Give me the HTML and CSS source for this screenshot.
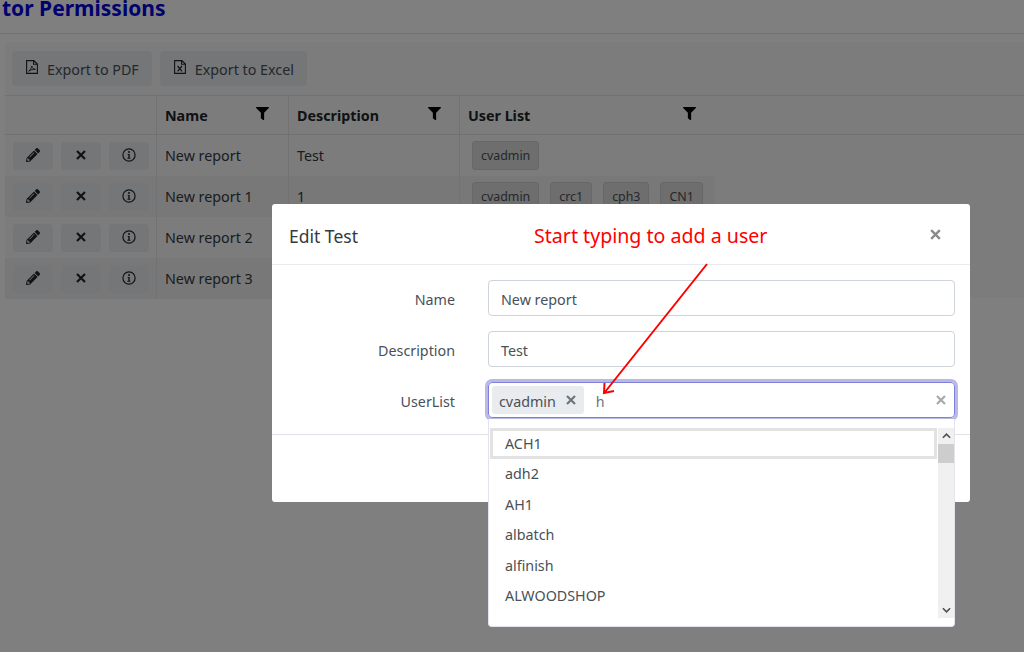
FILE: index.html
```html
<!DOCTYPE html>
<html lang="en">
<head>
<meta charset="utf-8">
<title>Permissions</title>
<link rel="stylesheet" href="styles.css">
</head>
<body>
<svg class="defs" width="0" height="0" aria-hidden="true">
  <symbol id="i-filter" viewBox="0 0 512 512"><path d="M487.976 0H24.028C2.71 0-8.047 25.866 7.058 40.971L192 225.941V432c0 7.831 3.821 15.17 10.237 19.662l80 55.98C298.02 518.69 320 507.493 320 487.98V225.941l184.947-184.97C520.021 25.896 509.338 0 487.976 0z"/></symbol>
  <symbol id="i-pencil" viewBox="0 0 512 512"><path d="M497.9 142.1l-46.1 46.1c-4.7 4.7-12.3 4.7-17 0l-111-111c-4.7-4.7-4.7-12.3 0-17l46.1-46.1c18.7-18.7 49.1-18.7 67.9 0l60.1 60.1c18.8 18.7 18.8 49.1 0 67.9zM284.2 99.8L21.6 362.4.4 483.9c-2.9 16.4 11.4 30.6 27.8 27.8l121.5-21.3 262.6-262.6c4.7-4.7 4.7-12.3 0-17l-111-111c-4.8-4.7-12.4-4.7-17.1 0zM124.1 339.9c-5.5-5.5-5.5-14.3 0-19.8l154-154c5.5-5.5 14.3-5.5 19.8 0s5.5 14.3 0 19.8l-154 154c-5.5 5.5-14.3 5.5-19.8 0zM88 424h48v36.3l-64.5 11.3-31.1-31.1L51.7 376H88v48z"/></symbol>
  <symbol id="i-x" viewBox="0 0 12 12"><path d="M2 2l8 8M10 2l-8 8" fill="none" stroke="currentColor" stroke-width="2.2"/></symbol>
  <symbol id="i-info" viewBox="0 0 14 14"><circle cx="7" cy="7" r="6.1" fill="none" stroke="currentColor" stroke-width="1.2"/><circle cx="7" cy="4" r="1"/><path d="M5.7 6h2v3.8h.8v1h-3.1v-1h.9V7h-.6z"/></symbol>
  <symbol id="i-pdf" viewBox="0 0 12 14"><path d="M.6.6h7.2l3.6 3.4v9.4H.6z M7.6.8v3.4h3.6" fill="none" stroke="currentColor" stroke-width="1.1"/><path d="M2.6 11.2c1.6-1 2.8-3 3.2-5.2.4 2 1.4 3 3.6 3.4-2.4-.2-4.8.4-6.8 1.8z" fill="none" stroke="currentColor" stroke-width=".9"/></symbol>
  <symbol id="i-xls" viewBox="0 0 12 14"><path d="M.6.6h7.2l3.6 3.4v9.4H.6z M7.6.8v3.4h3.6" fill="none" stroke="currentColor" stroke-width="1.1"/><path d="M3.6 6l4.4 5.4M8 6l-4.4 5.4" fill="none" stroke="currentColor" stroke-width="1.2"/></symbol>
</svg>

<div class="page">
  <h1 class="title">tor Permissions</h1>
  <section class="grid">
    <div class="toolbar">
      <button class="btn"><svg class="ic-file"><use href="#i-pdf"/></svg>Export to PDF</button>
      <button class="btn"><svg class="ic-file"><use href="#i-xls"/></svg>Export to Excel</button>
    </div>
    <div class="thead">
      <div class="th col-act"></div>
      <div class="th col-name">Name<svg class="ic-filter"><use href="#i-filter"/></svg></div>
      <div class="th col-desc">Description<svg class="ic-filter"><use href="#i-filter"/></svg></div>
      <div class="th col-users">User List<svg class="ic-filter"><use href="#i-filter"/></svg></div>
    </div>
    <div class="tr">
      <div class="td col-act"><button class="act"><svg class="ic-14"><use href="#i-pencil"/></svg></button><button class="act"><svg class="ic-12"><use href="#i-x"/></svg></button><button class="act"><svg class="ic-14"><use href="#i-info"/></svg></button></div>
      <div class="td col-name">New report</div>
      <div class="td col-desc">Test</div>
      <div class="td col-users"><span class="chip">cvadmin</span></div>
    </div>
    <div class="tr alt">
      <div class="td col-act"><button class="act"><svg class="ic-14"><use href="#i-pencil"/></svg></button><button class="act"><svg class="ic-12"><use href="#i-x"/></svg></button><button class="act"><svg class="ic-14"><use href="#i-info"/></svg></button></div>
      <div class="td col-name">New report 1</div>
      <div class="td col-desc">1</div>
      <div class="td col-users"><span class="chip">cvadmin</span><span class="chip">crc1</span><span class="chip">cph3</span><span class="chip">CN1</span></div>
    </div>
    <div class="tr">
      <div class="td col-act"><button class="act"><svg class="ic-14"><use href="#i-pencil"/></svg></button><button class="act"><svg class="ic-12"><use href="#i-x"/></svg></button><button class="act"><svg class="ic-14"><use href="#i-info"/></svg></button></div>
      <div class="td col-name">New report 2</div>
      <div class="td col-desc"></div>
      <div class="td col-users"></div>
    </div>
    <div class="tr alt">
      <div class="td col-act"><button class="act"><svg class="ic-14"><use href="#i-pencil"/></svg></button><button class="act"><svg class="ic-12"><use href="#i-x"/></svg></button><button class="act"><svg class="ic-14"><use href="#i-info"/></svg></button></div>
      <div class="td col-name">New report 3</div>
      <div class="td col-desc"></div>
      <div class="td col-users"></div>
    </div>
  </section>
</div>

<div class="backdrop"></div>

<div class="modal">
  <header class="modal-head">
    <h2 class="modal-title">Edit Test</h2>
    <span class="modal-close"><svg class="ic-10"><use href="#i-x"/></svg></span>
  </header>
  <div class="modal-body">
    <label class="lbl">Name</label><div class="input">New report</div>
    <label class="lbl">Description</label><div class="input">Test</div>
    <label class="lbl">UserList</label>
    <div class="input focus">
      <span class="tag">cvadmin<svg class="ic-tag"><use href="#i-x"/></svg></span>
      <span class="typed">h</span>
      <svg class="ic-clear"><use href="#i-x"/></svg>
    </div>
  </div>
  <div class="modal-foot"></div>
</div>

<div class="dropdown">
  <ul class="list">
    <li class="cur">ACH1</li>
    <li>adh2</li>
    <li>AH1</li>
    <li>albatch</li>
    <li>alfinish</li>
    <li>ALWOODSHOP</li>
  </ul>
  <div class="sbar">
    <svg class="sarrow" viewBox="0 0 10 6"><path d="M1 5l4-4 4 4" fill="none" stroke="currentColor" stroke-width="1.8"/></svg>
    <div class="thumb"></div>
    <div class="strack"></div>
    <svg class="sarrow" viewBox="0 0 10 6"><path d="M1 1l4 4 4-4" fill="none" stroke="currentColor" stroke-width="1.8"/></svg>
  </div>
</div>

<div class="note">Start typing to add a user</div>
<svg class="arrow" width="1024" height="652" viewBox="0 0 1024 652" aria-hidden="true">
  <path d="M707 264L605 392M604.500 383L604 393L614 391" fill="none" stroke="#ff0000" stroke-width="2"/>
</svg>
</body>
</html>
```
FILE: styles.css
```css
* { box-sizing: border-box; }
html, body { margin: 0; height: 652px; overflow: hidden; }
body {
  position: relative;
  background: #fff;
  color: #212529;
  font: 14.3px/21px "Noto Sans", "Open Sans", sans-serif;
}
.defs { position: absolute; }
svg { display: block; fill: currentColor; }

.page { height: 652px; overflow: hidden; }
.title {
  height: 34px;
  margin: 0;
  padding-left: 2px;
  border-bottom: 1px solid #e4e4e4;
  font-size: 21px;
  line-height: 17px;
  font-weight: 700;
  color: #0000dc;
}
.grid { margin: 8px 0 0 5px; background: #f8f9fa; height: 256px; }
.toolbar { display: flex; gap: 8px; height: 53px; padding: 9px 7px; }
.btn {
  display: flex; align-items: center;
  height: 35px;
  padding: 2px 13px 0 14px;
  border: 0; border-radius: 4px;
  background: #e9ecef;
  color: #495057;
  font: inherit;
}
.ic-file { width: 12px; height: 14px; margin-right: 9px; margin-top: -5px; color: #212529; }

.thead {
  display: flex; height: 40px;
  border-top: 1px solid #e4e4e4;
  border-bottom: 1px solid #dee2e6;
  font-weight: 700;
}
.th {
  display: flex; align-items: center; justify-content: space-between;
  padding: 0 19px 0 8px;
  border-left: 1px solid #e4e4e4;
}
.th:first-child { border-left: 0; }
.ic-filter { width: 13px; height: 13px; margin-top: -4px; color: #000; }
.col-act { width: 151px; }
.col-name { width: 132px; }
.col-desc { width: 171px; }
.col-users { width: 256px; }
.th.col-desc { padding-right: 18px; }
.th.col-users { padding-right: 19px; }

.tr { display: flex; width: 710px; height: 41px; }
.tr.alt { background: #f0f0f0; }
.td { display: flex; align-items: center; padding: 0 8px; border-left: 1px solid #e4e4e4; color: #343a40; }
.td:first-child { border-left: 0; }
.td.col-act { gap: 8px; padding-right: 0; }
.act {
  display: flex; align-items: center; justify-content: center;
  width: 40px; height: 28px; padding: 0 0 2px;
  border: 0; border-radius: 4px;
  background: #e9ecef;
  color: #212529;
}
.ic-14 { width: 14px; height: 14px; }
.ic-12 { width: 12px; height: 12px; }
.ic-10 { width: 13px; height: 13px; }
.td.col-users { gap: 11px; padding-left: 12px; }
.chip {
  padding: 3px 8px;
  height: 29px;
  border: 1px solid #cfcfcf;
  border-radius: 3px;
  background: #dcdcdc;
  font-size: 12.400px;
  line-height: 21px;
  color: #495057;
}

.backdrop { position: absolute; inset: 0; background: rgba(0,0,0,.5); }

.modal {
  position: absolute; left: 272px; top: 204px;
  width: 698px; height: 298px;
  display: flex; flex-direction: column;
  background: #fff;
  border-radius: 3px;
}
.modal-head {
  flex: none; height: 61px;
  display: flex; align-items: center; justify-content: space-between;
  padding: 3px 28px 0 17px;
  border-bottom: 1px solid #e9ecef;
}
.modal-title { margin: 0; font-size: 17.500px; line-height: 24px; font-weight: 400; color: #343a40; }
.modal-close { color: #8a8a8a; margin-top: -3px; }
.modal-body {
  flex: none; height: 170px;
  display: grid;
  grid-template-columns: 183px 1fr;
  column-gap: 33px;
  row-gap: 15px;
  grid-auto-rows: 36px;
  padding: 15px 15px 0 0;
  border-bottom: 1px solid #dee2e6;
}
.lbl { align-self: center; padding-top: 3px; text-align: right; color: #495057; }
.input {
  display: flex; align-items: center;
  height: 36px;
  padding: 3px 12px 0;
  border: 1px solid #ced4da;
  border-radius: 4px;
  color: #495057;
}
.input.focus {
  padding: 0 4px 0 3px;
  border-color: #8080d8;
  box-shadow: 0 0 0 3px #b9b9e6;
}
.tag {
  display: flex; align-items: center;
  height: 28px;
  padding: 3px 7px 0 7px;
  border-radius: 3px;
  background: #e9ecef;
  color: #495057;
}
.ic-tag { width: 12px; height: 12px; margin-left: 9px; margin-top: -4px; color: #6c757d; }
.typed { margin-left: 12px; padding-top: 3px; flex: 1; color: #6c757d; }
.ic-clear { width: 12px; height: 12px; margin-right: 3px; color: #a9a9a9; }

.dropdown {
  position: absolute; left: 488px; top: 419px;
  width: 467px; height: 208px;
  display: flex; align-items: flex-start; gap: 1px;
  padding: 9px 0 0 1px;
  background: #fff;
  border: 1px solid #e3e3ef;
  border-top: 0;
  border-radius: 0 0 4px 4px;
}
.list { flex: 1; margin: 0; padding: 0; list-style: none; color: #495057; }
.list li { height: 30.500px; padding: 4.750px 15px; line-height: 21px; }
.list li.cur { padding: 1.750px 12px; border: 3px solid #e2e2e2; }
.sbar {
  flex: none; width: 16px; height: 190px;
  display: flex; flex-direction: column; align-items: center;
  background: #f0f0f0;
  color: #505050;
}
.sarrow { flex: none; width: 9px; height: 16px; }
.thumb { flex: none; width: 100%; height: 19px; background: #cdcdcd; }
.strack { flex: 1; }

.note {
  position: absolute; left: 534px; top: 221px;
  font-size: 19.600px; line-height: 30px;
  color: #ff0000;
  white-space: nowrap;
}
.arrow { position: absolute; left: 0; top: 0; pointer-events: none; }
```
